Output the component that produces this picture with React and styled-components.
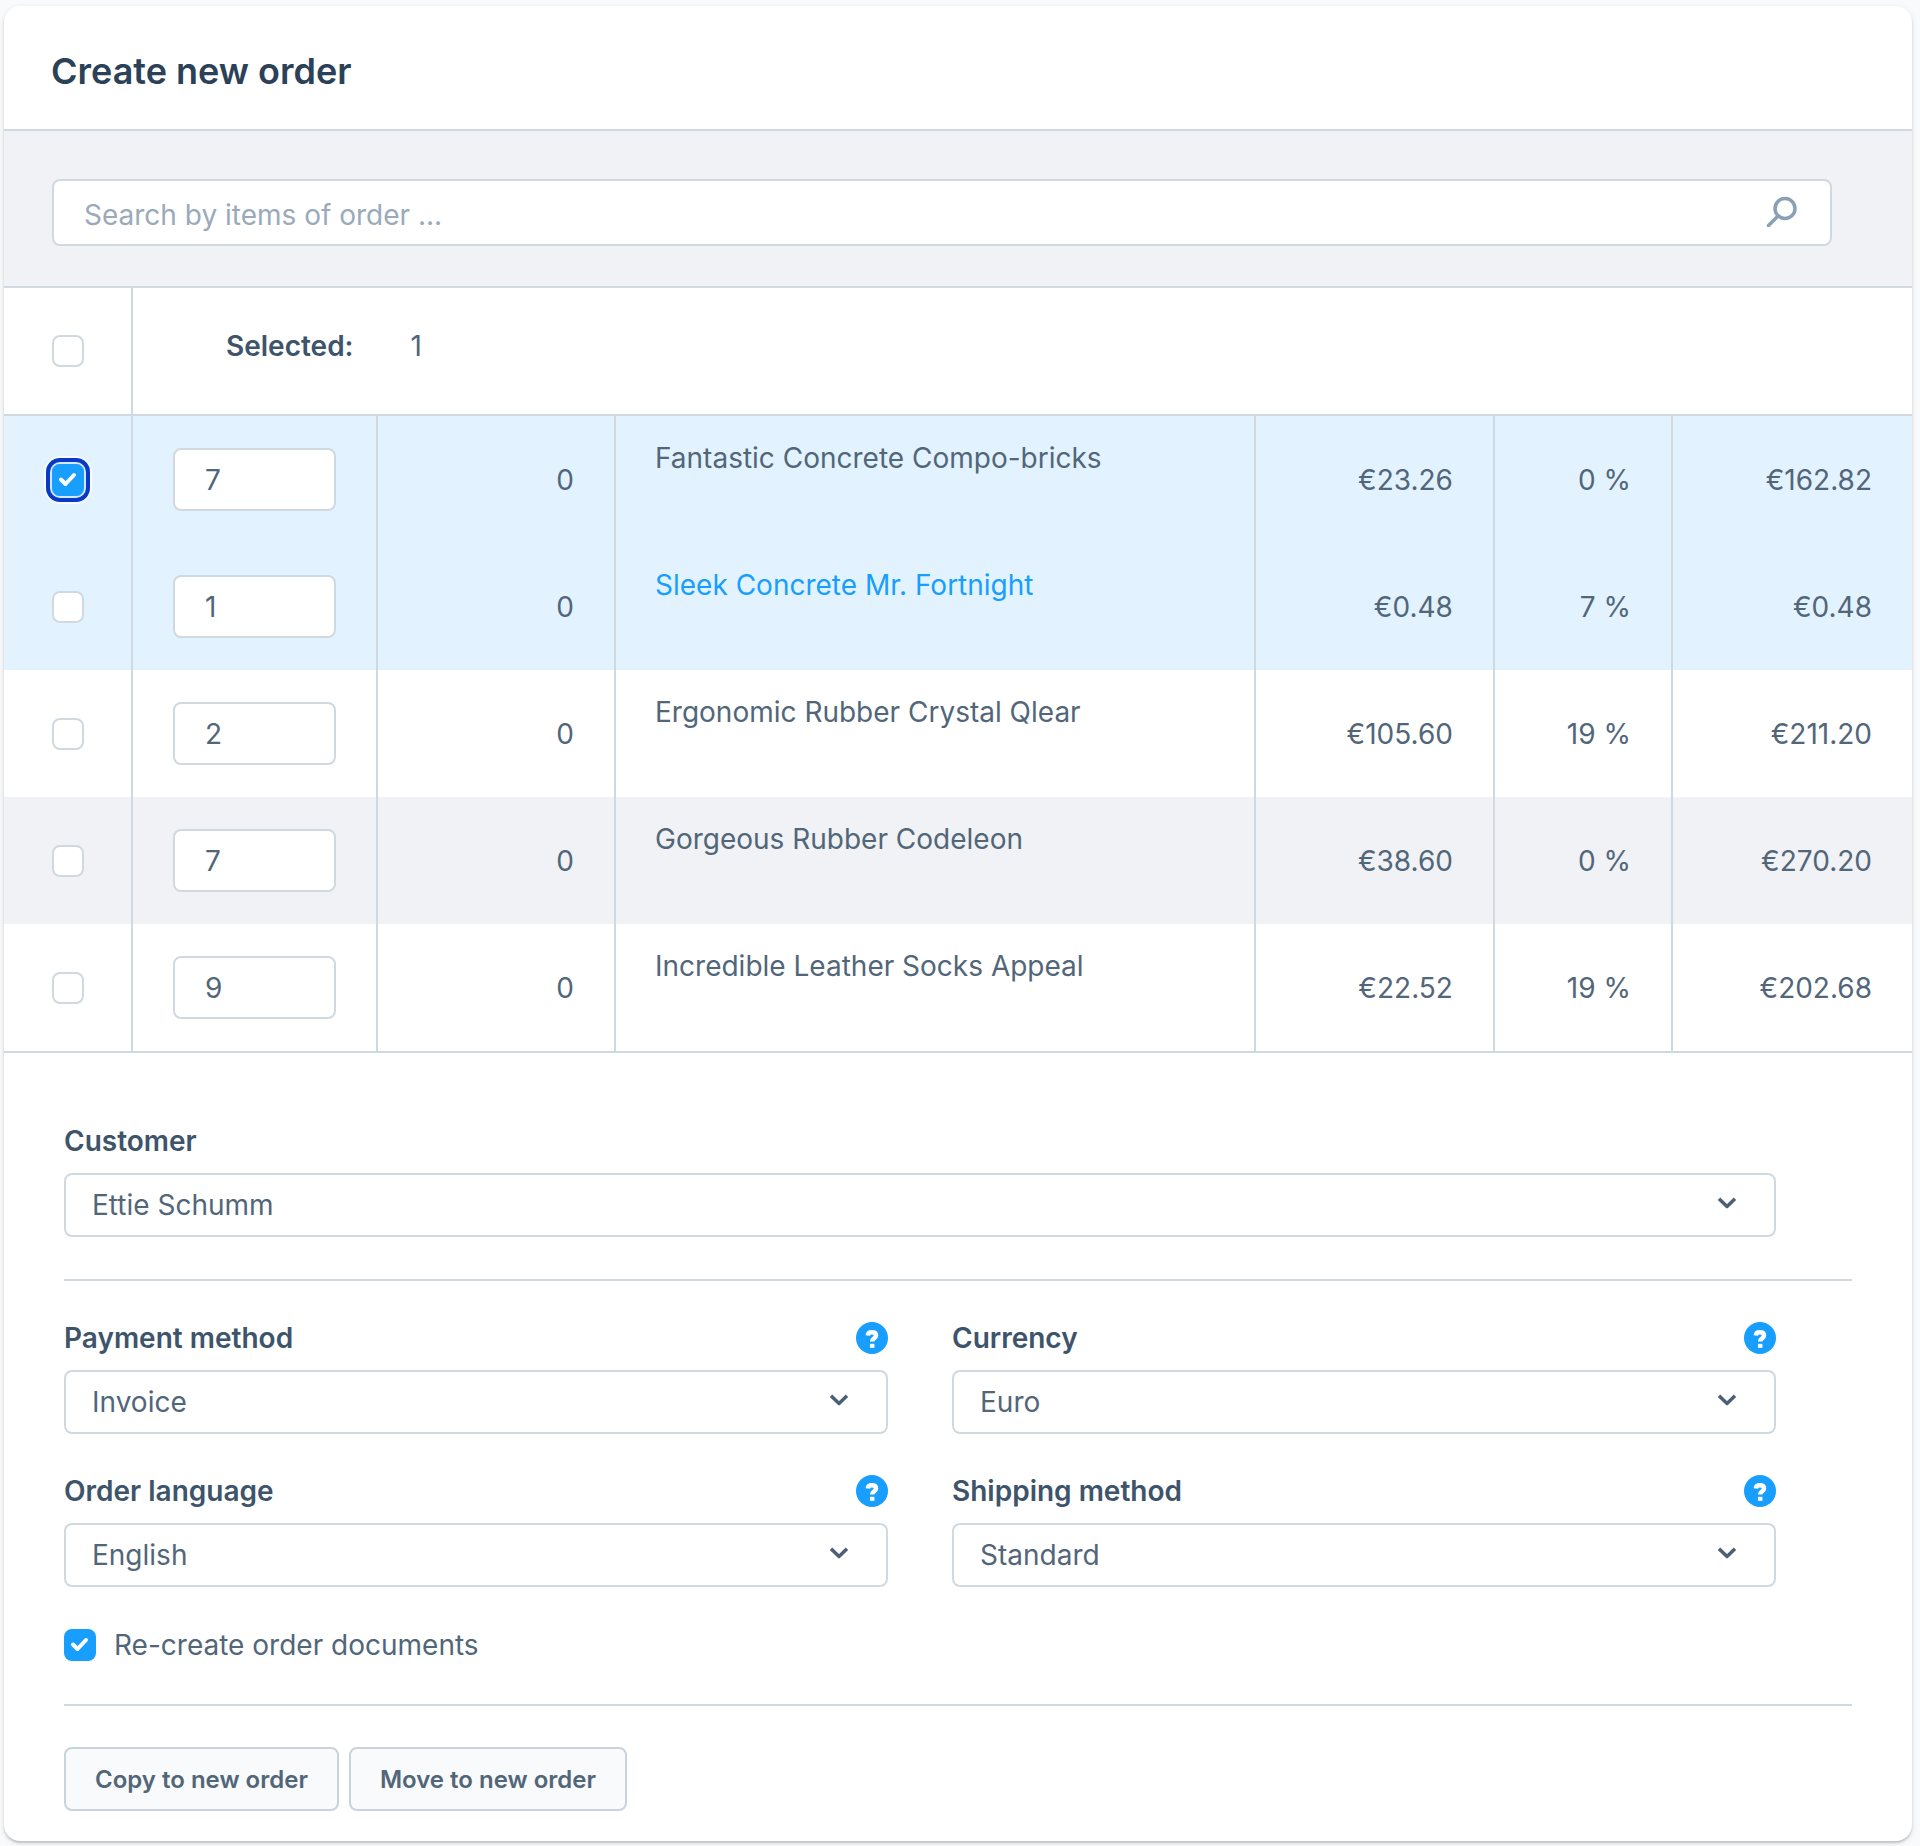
import React, { useState } from 'react';
import styled, { createGlobalStyle } from 'styled-components';

const GlobalStyle = createGlobalStyle`
    * {
        box-sizing: border-box;
    }

    body {
        margin: 0;
        background: #f9fafb;
        color: #52667a;
        font-family: Inter, 'Liberation Sans', sans-serif;
        font-size: 28px;
        line-height: 36px;
    }

    input,
    select,
    button {
        font-family: inherit;
        color: inherit;
    }
`;

const Card = styled.main`
    margin: 6px 8px 6px 4px;
    background: white;
    border-radius: 16px;
    box-shadow: 0 2px 2px rgba(0, 0, 0, 0.16), 0 2px 6px rgba(0, 0, 0, 0.1);
    overflow: hidden;
`;

const Header = styled.header`
    padding: 47px 47px 40px;
    border-bottom: 2px solid #d1d9e0;

    & h1 {
        margin: 0;
        font-size: 36px;
        font-weight: 600;
        line-height: 36px;
        color: #2b4158;
    }
`;

const SearchBar = styled.div`
    padding: 48px 80px 40px 48px;
    background: #f0f2f5;
    border-bottom: 2px solid #d1d9e0;
`;

const SearchField = styled.div`
    position: relative;

    & input {
        display: block;
        width: 100%;
        height: 67px;
        padding: 4px 80px 0 30px;
        border: 2px solid #d1d9e0;
        border-radius: 8px;
        background: white;
        font-size: 28px;
    }

    & input::placeholder {
        color: #9aaabb;
        opacity: 1;
    }

    & svg {
        position: absolute;
        right: 34px;
        top: 16px;
        pointer-events: none;
    }
`;

const Table = styled.table`
    width: 100%;
    table-layout: fixed;
    border-spacing: 0;
    border-bottom: 2px solid #d1d9e0;
`;

const Col = styled.col`
    width: ${(props) => props.$width || 'auto'};
`;

const rowColors = {
    selected: '#e2f3ff',
    striped: '#f0f2f5',
    plain: 'white',
};

const Row = styled.tr`
    height: 127px;
    background: ${(props) => rowColors[props.$tone]};
`;

const Cell = styled.td`
    padding: ${(props) => (props.$top ? '24px 39px' : '0 40px')};
    text-align: ${(props) => props.$align || 'left'};
    vertical-align: ${(props) => (props.$top ? 'top' : 'middle')};

    &:not(:last-child) {
        border-right: 2px solid #d1d9e0;
    }
`;

const CheckCell = styled(Cell)`
    padding: 0 0 0 48px;
`;

const SelectionRow = styled.tr`
    height: 128px;

    & td {
        border-bottom: 2px solid #d1d9e0;
    }
`;

const SelectionInfo = styled.div`
    display: flex;
    gap: 57px;
    padding: 0 53px 10px;

    & strong {
        font-weight: 600;
        color: #3d546b;
    }
`;

const ItemLink = styled.a`
    color: #189eff;
    text-decoration: none;
`;

const QuantityInput = styled.input`
    display: block;
    width: 100%;
    height: 63px;
    padding: 0 30px;
    border: 2px solid #d1d9e0;
    border-radius: 8px;
    background: white;
    font-size: 28px;
`;

const CheckWrapper = styled.span`
    display: grid;
    width: 32px;
    height: 32px;
    border-radius: 8px;
    box-shadow: ${(props) =>
        props.$focused ? '0 0 0 2px #d3eafc, 0 0 0 6px #0a38c8, 0 0 0 8px #f6fbff' : 'none'};

    & > * {
        grid-area: 1 / 1;
    }

    & input {
        appearance: none;
        width: 32px;
        height: 32px;
        margin: 0;
        border: 2px solid #d1d9e0;
        border-radius: 8px;
        background: white;
        outline: none;
    }

    & input:checked {
        border-color: #189eff;
        background: #189eff;
    }

    & svg {
        pointer-events: none;
    }
`;

const Form = styled.form`
    padding: 72px 60px 30px;
`;

const FormSection = styled.div`
    display: grid;
    grid-template-columns: ${(props) => (props.$columns === 2 ? '1fr 1fr' : '1fr')};
    gap: 41px 64px;
    padding-right: 76px;
`;

const Divider = styled.hr`
    height: 2px;
    margin: 42px 0 41px;
    border: none;
    background: #d1d9e0;
`;

const FieldHeader = styled.div`
    display: flex;
    align-items: center;
    justify-content: space-between;
    height: 32px;
    margin-bottom: 16px;

    & label {
        font-weight: 600;
        color: #3d546b;
    }
`;

const HelpButton = styled.button`
    display: block;
    width: 32px;
    height: 32px;
    padding: 0;
    border: none;
    border-radius: 50%;
    background: #189eff;
    color: white;
`;

const SelectWrapper = styled.div`
    position: relative;

    & select {
        display: block;
        appearance: none;
        width: 100%;
        height: 64px;
        padding: 0 80px 0 26px;
        border: 2px solid #d1d9e0;
        border-radius: 8px;
        background: white;
        font-size: 28px;
    }

    & svg {
        position: absolute;
        right: 36px;
        top: 19px;
        pointer-events: none;
    }
`;

const CheckLabel = styled.label`
    display: flex;
    align-items: center;
    gap: 18px;
    height: 34px;
    margin-top: 41px;
`;

const Actions = styled.div`
    display: flex;
    gap: 10px;
`;

const ActionButton = styled.button`
    height: 64px;
    padding: 0 29px;
    border: 2px solid #c8d3de;
    border-radius: 8px;
    background: #f9fafb;
    font-size: 24px;
    font-weight: 600;
`;

const SearchIcon = () => (
    <svg width="32" height="32" viewBox="0 0 32 32" fill="none" stroke="#8aa0b6" strokeWidth="3.5">
        <circle cx="19" cy="13.5" r="10" />
        <path d="M12 21 2.5 30.5" strokeLinecap="round" />
    </svg>
);

const ChevronIcon = () => (
    <svg width="26" height="24" viewBox="0 0 26 24" fill="none" stroke="#4b6077" strokeWidth="3.5">
        <path d="M5 6.800 13 14.500l8-7.700" strokeLinejoin="round" />
    </svg>
);

const CheckIcon = () => (
    <svg width="32" height="32" viewBox="0 0 32 32" fill="none" stroke="white" strokeWidth="4">
        <path d="m9 15.5 4.5 4.5 8.500-9" strokeLinecap="round" strokeLinejoin="round" />
    </svg>
);

const HelpIcon = () => (
    <svg width="32" height="32" viewBox="0 0 32 32" fill="none" stroke="white" strokeWidth="4.5">
        <path d="M11.8 13.5c.2-2.400 1.8-3.200 4-3.200 2.600 0 4.200 1.200 4.200 3.200 0 2.800-3.800 2.600-3.800 6" />
        <path d="M16.2 21.8v4" />
    </svg>
);

const Checkbox = ({ checked, focused, onChange, label, id }) => (
    <CheckWrapper $focused={focused}>
        <input type="checkbox" id={id} checked={checked} onChange={onChange} aria-label={label} />
        {checked && <CheckIcon />}
    </CheckWrapper>
);

const SelectField = ({ id, label, value, help }) => (
    <div>
        <FieldHeader>
            <label htmlFor={id}>{label}</label>
            {help && (
                <HelpButton type="button" aria-label={`Help: ${label}`}>
                    <HelpIcon />
                </HelpButton>
            )}
        </FieldHeader>
        <SelectWrapper>
            <select id={id} defaultValue={value}>
                <option>{value}</option>
            </select>
            <ChevronIcon />
        </SelectWrapper>
    </div>
);

const items = [
    { id: 1, quantity: 7, shipped: 0, name: 'Fantastic Concrete Compo-bricks', price: '€23.26', tax: '0 %', total: '€162.82', tone: 'selected' },
    { id: 2, quantity: 1, shipped: 0, name: 'Sleek Concrete Mr. Fortnight', price: '€0.48', tax: '7 %', total: '€0.48', tone: 'selected', link: true },
    { id: 3, quantity: 2, shipped: 0, name: 'Ergonomic Rubber Crystal Qlear', price: '€105.60', tax: '19 %', total: '€211.20', tone: 'plain' },
    { id: 4, quantity: 7, shipped: 0, name: 'Gorgeous Rubber Codeleon', price: '€38.60', tax: '0 %', total: '€270.20', tone: 'striped' },
    { id: 5, quantity: 9, shipped: 0, name: 'Incredible Leather Socks Appeal', price: '€22.52', tax: '19 %', total: '€202.68', tone: 'plain' },
];

const App = () => {
    const [selected, setSelected] = useState([1]);
    const [recreate, setRecreate] = useState(true);

    const allSelected = selected.length === items.length;

    const toggle = (id) => {
        setSelected((prev) => (prev.includes(id) ? prev.filter((v) => v !== id) : [...prev, id]));
    };

    return (
        <>
            <GlobalStyle />
            <Card>
                <Header>
                    <h1>Create new order</h1>
                </Header>
                <SearchBar>
                    <SearchField>
                        <input type="text" placeholder="Search by items of order ..." aria-label="Search" />
                        <SearchIcon />
                    </SearchField>
                </SearchBar>
                <Table>
                    <colgroup>
                        <Col $width="129px" />
                        <Col $width="245px" />
                        <Col $width="238px" />
                        <Col />
                        <Col $width="239px" />
                        <Col $width="178px" />
                        <Col $width="239px" />
                    </colgroup>
                    <tbody>
                        <SelectionRow>
                            <CheckCell>
                                <Checkbox
                                    label="Select all"
                                    checked={allSelected}
                                    onChange={() => setSelected(allSelected ? [] : items.map((v) => v.id))}
                                />
                            </CheckCell>
                            <Cell colSpan={6}>
                                <SelectionInfo>
                                    <strong>Selected:</strong>
                                    <span>{selected.length}</span>
                                </SelectionInfo>
                            </Cell>
                        </SelectionRow>
                        {items.map((v, i) => (
                            <Row key={v.id} $tone={v.tone}>
                                <CheckCell>
                                    <Checkbox
                                        label={v.name}
                                        checked={selected.includes(v.id)}
                                        focused={i === 0}
                                        onChange={() => toggle(v.id)}
                                    />
                                </CheckCell>
                                <Cell>
                                    <QuantityInput type="text" defaultValue={v.quantity} aria-label={`Quantity of ${v.name}`} />
                                </Cell>
                                <Cell $align="right">{v.shipped}</Cell>
                                <Cell $top>{v.link ? <ItemLink href="#item">{v.name}</ItemLink> : v.name}</Cell>
                                <Cell $align="right">{v.price}</Cell>
                                <Cell $align="right">{v.tax}</Cell>
                                <Cell $align="right">{v.total}</Cell>
                            </Row>
                        ))}
                    </tbody>
                </Table>
                <Form onSubmit={(e) => e.preventDefault()}>
                    <FormSection>
                        <SelectField id="customer" label="Customer" value="Ettie Schumm" />
                    </FormSection>
                    <Divider />
                    <FormSection $columns={2}>
                        <SelectField id="payment" label="Payment method" value="Invoice" help />
                        <SelectField id="currency" label="Currency" value="Euro" help />
                        <SelectField id="language" label="Order language" value="English" help />
                        <SelectField id="shipping" label="Shipping method" value="Standard" help />
                    </FormSection>
                    <CheckLabel htmlFor="recreate">
                        <Checkbox id="recreate" checked={recreate} onChange={() => setRecreate(!recreate)} />
                        Re-create order documents
                    </CheckLabel>
                    <Divider />
                    <Actions>
                        <ActionButton type="submit">Copy to new order</ActionButton>
                        <ActionButton type="button">Move to new order</ActionButton>
                    </Actions>
                </Form>
            </Card>
        </>
    );
};

export default App;
